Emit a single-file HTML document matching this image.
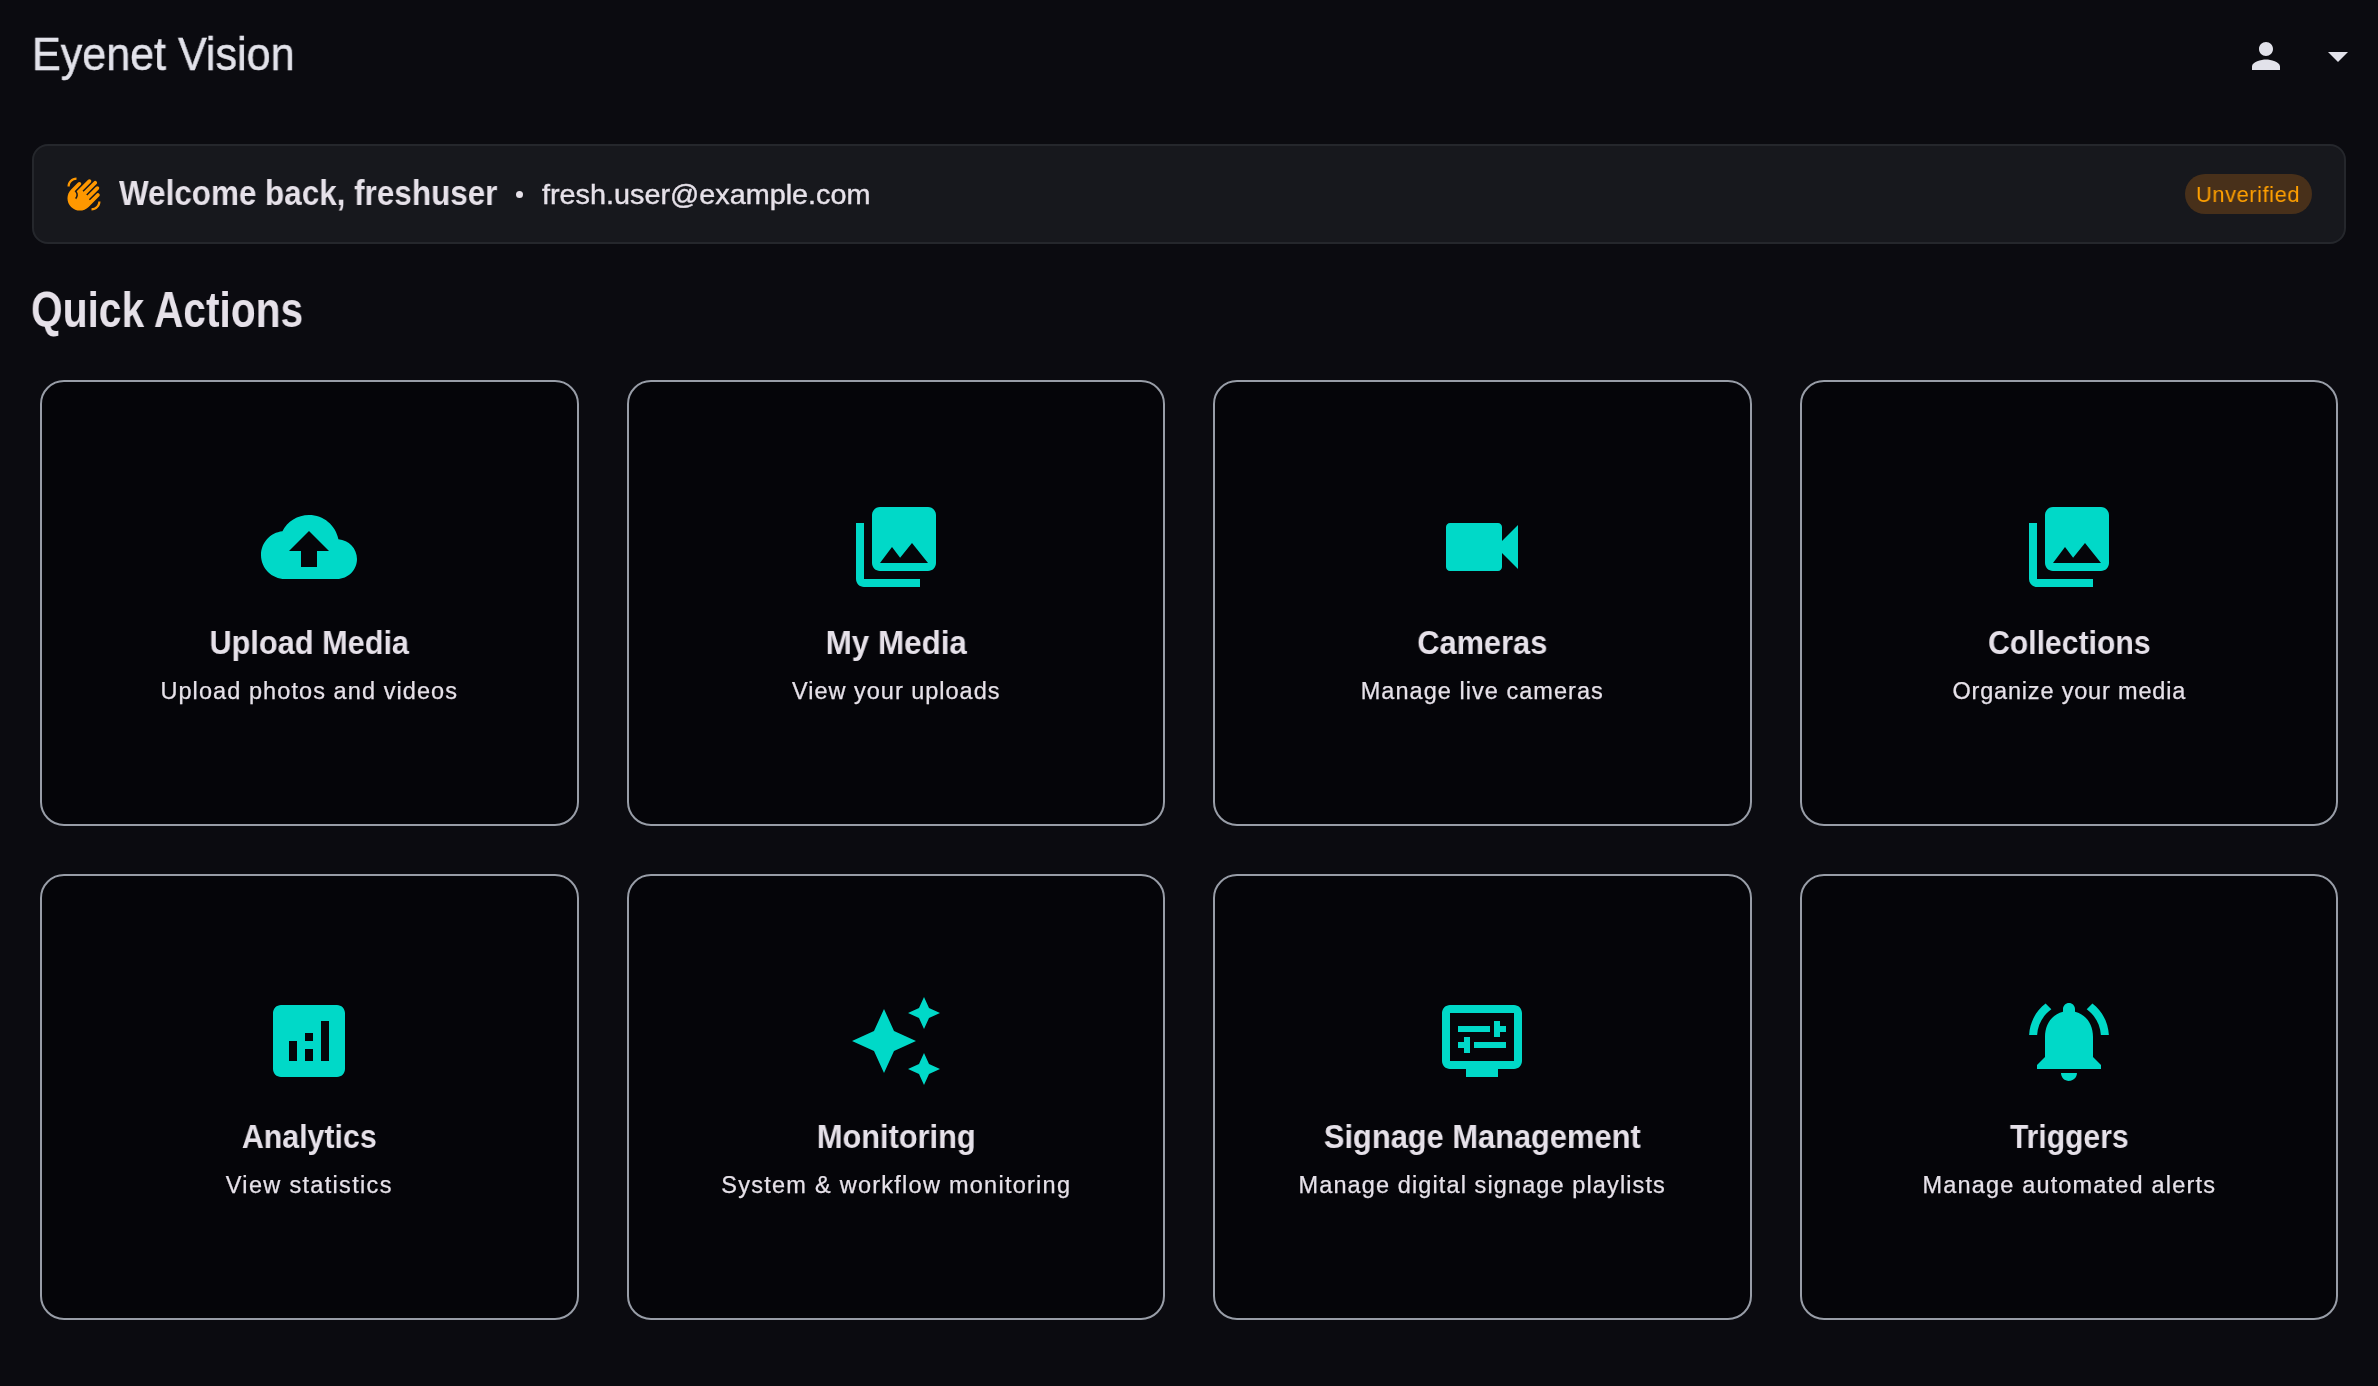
<!DOCTYPE html>
<html>
<head>
<meta charset="utf-8">
<style>
html,body{margin:0;padding:0;}
body{width:2378px;height:1386px;background:#0b0b10;position:relative;overflow:hidden;font-family:"Liberation Sans",sans-serif;color:#e6e1e9;}
.abs{position:absolute;line-height:1;white-space:nowrap;will-change:transform;}
#title{left:32px;top:30.6px;font-size:46.5px;color:#e2e2ea;transform:scaleX(0.926);transform-origin:0 0;-webkit-text-stroke:0.5px #e2e2ea;}
#person{position:absolute;left:2245px;top:35px;width:42px;height:42px;}
#drop{position:absolute;left:2314px;top:32px;width:48px;height:48px;}
#welcome{position:absolute;left:32px;top:144px;width:2314px;height:100px;box-sizing:border-box;border:2px solid #25272c;background:#17181d;border-radius:16px;}
#wave{position:absolute;left:65.6px;top:175.6px;width:36px;height:36px;}
#wtext{left:119px;top:175.2px;font-size:35.2px;font-weight:bold;transform:scaleX(0.893);transform-origin:0 0;}
#dot{position:absolute;left:516px;top:191px;width:7px;height:7px;border-radius:50%;background:#e6e1e9;}
#email{left:542px;top:180.7px;font-size:27.5px;transform:scaleX(1.047);transform-origin:0 0;-webkit-text-stroke:0.4px #e6e1e9;}
#chip{position:absolute;left:2185px;top:174px;width:127px;height:40px;border-radius:20px;background:#48301a;}
#chiptext{left:2195.8px;top:183.1px;font-size:22.7px;color:#ffa000;letter-spacing:0.6px;transform:scaleX(0.962);transform-origin:0 0;}
#qa{left:31px;top:284.7px;font-size:50px;font-weight:bold;transform:scaleX(0.814);transform-origin:0 0;}
.card{position:absolute;width:538.5px;height:446px;box-sizing:border-box;border:2px solid #989da7;border-radius:24px;background:#050509;}
.card svg{position:absolute;left:219.25px;top:117px;width:96px;height:96px;fill:#00d9c8;}
.card .t{will-change:transform;position:absolute;left:0;right:0;text-align:center;line-height:1;white-space:nowrap;top:243px;font-size:34px;font-weight:bold;color:#e6e1e9;transform:scaleX(0.906);}
.card .s{will-change:transform;position:absolute;left:0;right:0;text-align:center;line-height:1;white-space:nowrap;top:297.6px;font-size:23.5px;color:#e6e1e9;letter-spacing:1px;-webkit-text-stroke:0.25px #e6e1e9;}
</style>
</head>
<body>
<div id="title" class="abs">Eyenet Vision</div>
<svg id="person" viewBox="0 0 24 24" fill="#e2e2ea"><path d="M12 12c2.21 0 4-1.79 4-4s-1.79-4-4-4-4 1.79-4 4 1.79 4 4 4zm0 2c-2.67 0-8 1.34-8 4v2h16v-2c0-2.66-5.33-4-8-4z"/></svg>
<svg id="drop" viewBox="0 0 24 24" fill="#e2e2ea"><path d="M7 10l5 5 5-5z"/></svg>

<div id="welcome"></div>
<svg id="wave" viewBox="0 0 24 24" fill="#ff9800"><path d="M23 17c0 3.31-2.69 6-6 6v-1.5c2.48 0 4.5-2.02 4.5-4.5H23zM1 7c0-3.31 2.69-6 6-6v1.5C4.52 2.5 2.5 4.52 2.5 7H1zm7.01-2.68-4.6 4.6c-3.22 3.22-3.22 8.45 0 11.67s8.45 3.22 11.67 0l7.07-7.07c.49-.49.49-1.28 0-1.77-.49-.49-1.28-.49-1.77 0l-4.42 4.42-.71-.71 6.54-6.54c.49-.49.49-1.28 0-1.77s-1.28-.49-1.77 0l-5.83 5.83-.71-.71 6.89-6.89c.49-.49.49-1.28 0-1.77s-1.28-.49-1.77 0l-6.89 6.89-.69-.7 5.48-5.48c.49-.49.49-1.28 0-1.77-.49-.49-1.28-.49-1.77 0l-7.62 7.62c1.22 1.57 1.11 3.84-.33 5.28l-.71-.71c1.17-1.17 1.17-3.07 0-4.24l-.35-.35 4.07-4.07c.49-.49.49-1.28 0-1.77-.49-.48-1.29-.48-1.78.01z"/></svg>
<div id="wtext" class="abs">Welcome back, freshuser</div>
<div id="dot"></div>
<div id="email" class="abs">fresh.user@example.com</div>
<div id="chip"></div>
<div id="chiptext" class="abs">Unverified</div>

<div id="qa" class="abs">Quick Actions</div>

<div class="card" style="left:40px;top:380px;">
<svg viewBox="0 0 24 24"><path d="M19.35 10.04C18.67 6.59 15.64 4 12 4 9.11 4 6.6 5.64 5.35 8.04 2.34 8.36 0 10.91 0 14c0 3.31 2.69 6 6 6h13c2.76 0 5-2.24 5-5 0-2.64-2.05-4.78-4.65-4.96zM14 13v4h-4v-4H7l5-5 5 5h-3z"/></svg>
<div class="t" style="transform:scaleX(0.9028)">Upload Media</div><div class="s" style="letter-spacing:1.08px">Upload photos and videos</div>
</div>
<div class="card" style="left:626.5px;top:380px;">
<svg viewBox="0 0 24 24"><path d="M22 16V4c0-1.1-.9-2-2-2H8c-1.1 0-2 .9-2 2v12c0 1.1.9 2 2 2h12c1.1 0 2-.9 2-2zm-11-4 2.03 2.71L16 11l4 5H8l3-4zM2 6v14c0 1.1.9 2 2 2h14v-2H4V6H2z"/></svg>
<div class="t" style="transform:scaleX(0.9232)">My Media</div><div class="s" style="letter-spacing:0.99px">View your uploads</div>
</div>
<div class="card" style="left:1213px;top:380px;">
<svg viewBox="0 0 24 24"><path d="M17 10.5V7c0-.55-.45-1-1-1H4c-.55 0-1 .45-1 1v10c0 .55.45 1 1 1h12c.55 0 1-.45 1-1v-3.5l4 4v-11l-4 4z"/></svg>
<div class="t" style="transform:scaleX(0.9053)">Cameras</div><div class="s" style="letter-spacing:1.04px">Manage live cameras</div>
</div>
<div class="card" style="left:1799.5px;top:380px;">
<svg viewBox="0 0 24 24"><path d="M22 16V4c0-1.1-.9-2-2-2H8c-1.1 0-2 .9-2 2v12c0 1.1.9 2 2 2h12c1.1 0 2-.9 2-2zm-11-4 2.03 2.71L16 11l4 5H8l3-4zM2 6v14c0 1.1.9 2 2 2h14v-2H4V6H2z"/></svg>
<div class="t" style="transform:scaleX(0.8872)">Collections</div><div class="s" style="letter-spacing:0.82px">Organize your media</div>
</div>

<div class="card" style="left:40px;top:874px;">
<svg viewBox="0 0 24 24"><path d="M19 3H5c-1.1 0-2 .9-2 2v14c0 1.1.9 2 2 2h14c1.1 0 2-.9 2-2V5c0-1.1-.9-2-2-2zM9 17H7v-5h2v5zm4 0h-2v-3h2v3zm0-5h-2v-2h2v2zm4 5h-2V7h2v10z"/></svg>
<div class="t" style="transform:scaleX(0.8919)">Analytics</div><div class="s" style="letter-spacing:1.32px">View statistics</div>
</div>
<div class="card" style="left:626.5px;top:874px;">
<svg viewBox="0 0 24 24"><path d="M19 9l1.25-2.75L23 5l-2.75-1.25L19 1l-1.25 2.75L15 5l2.75 1.25L19 9zm-7.5.5L9 4 6.5 9.5 1 12l5.5 2.5L9 20l2.5-5.5L17 12l-5.5-2.5zM19 15l-1.25 2.75L15 19l2.75 1.25L19 23l1.25-2.75L23 19l-2.75-1.25L19 15z"/></svg>
<div class="t" style="transform:scaleX(0.9043)">Monitoring</div><div class="s" style="letter-spacing:1.26px">System &amp; workflow monitoring</div>
</div>
<div class="card" style="left:1213px;top:874px;">
<svg viewBox="0 0 24 24"><path d="M20 3H4c-1.1 0-2 .9-2 2v12c0 1.1.9 2 2 2h4v2h8v-2h4c1.1 0 2-.9 2-2V5c0-1.1-.9-2-2-2zm0 14H4V5h16v12zM6 8.25h8v1.5H6zM15 7h1.5v4H15zM16.5 8.25H18v1.5h-1.5zM6 12.25h1.5v1.5H6zM7.5 11H9v4H7.5zM10 12.25h8v1.5h-8z"/></svg>
<div class="t" style="transform:scaleX(0.9063)">Signage Management</div><div class="s" style="letter-spacing:1.11px">Manage digital signage playlists</div>
</div>
<div class="card" style="left:1799.5px;top:874px;">
<svg viewBox="0 0 24 24"><path d="M7.58 4.08 6.15 2.65C3.75 4.48 2.17 7.3 2.03 10.5h2c.15-2.65 1.51-4.97 3.55-6.42zm12.39 6.42h2c-.15-3.2-1.73-6.02-4.12-7.85l-1.42 1.43c2.02 1.45 3.39 3.77 3.54 6.42zM18 11c0-3.07-1.64-5.64-4.5-6.32V4c0-.83-.67-1.5-1.5-1.5s-1.5.67-1.5 1.5v.68C7.63 5.36 6 7.92 6 11v5l-2 2v1h16v-1l-2-2v-5zm-6 11c.14 0 .27-.01.4-.04.65-.14 1.18-.58 1.44-1.18.1-.24.15-.5.15-.78h-4c.01 1.1.9 2 2.01 2z"/></svg>
<div class="t" style="transform:scaleX(0.8843)">Triggers</div><div class="s" style="letter-spacing:1.18px">Manage automated alerts</div>
</div>
<script>(function(){var w=window.innerWidth;if(w&&Math.abs(w-2378)>2){document.documentElement.style.zoom=(w/2378);}})();</script>
</body>
</html>
